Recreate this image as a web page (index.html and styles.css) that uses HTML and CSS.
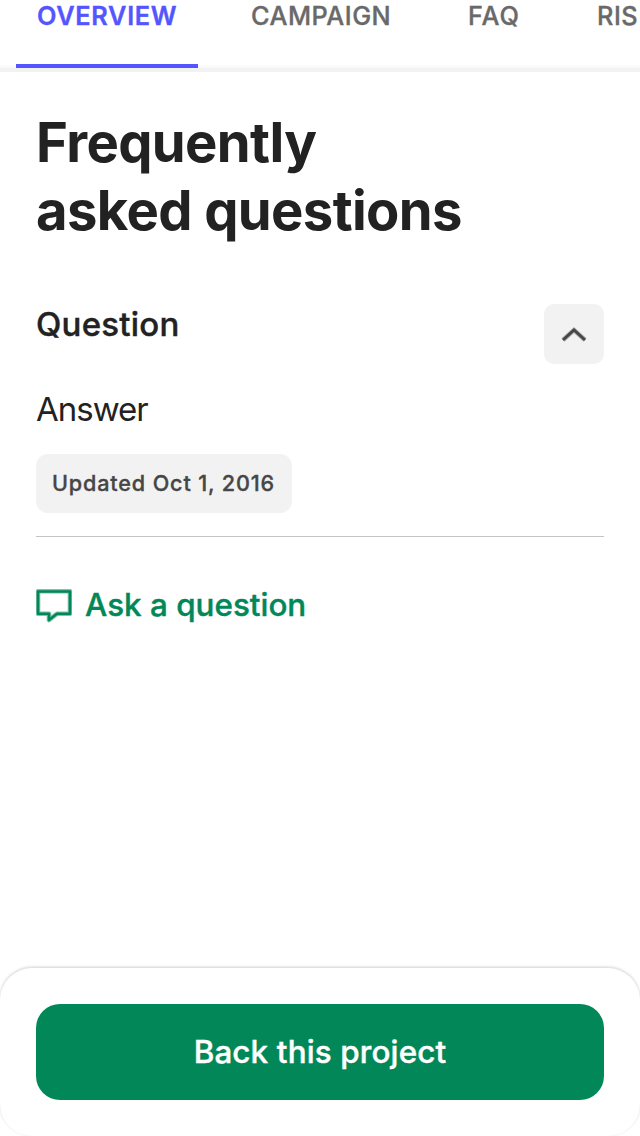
FILE: index.html
```html
<!DOCTYPE html>
<html lang="en">
<head>
<meta charset="utf-8">
<title>Frequently asked questions</title>
<link rel="stylesheet" href="styles.css">
</head>
<body>
<div class="screen">
  <nav class="tabs">
    <a class="tab tab-active">OVERVIEW</a>
    <a class="tab tab-campaign">CAMPAIGN</a>
    <a class="tab tab-faq">FAQ</a>
    <a class="tab tab-risks">RIS</a>
  </nav>
  <div class="tabs-edge"></div>
  <main class="content">
    <h1 class="title">Frequently<br>asked questions</h1>
    <section class="item">
      <div class="item-head">
        <h2 class="question">Question</h2>
        <button class="toggle" aria-label="Collapse">
          <svg width="28" height="20" viewBox="0 0 28 20"><path d="M3 16L14 6L25 16" fill="none" stroke="#464646" stroke-opacity=".4" stroke-width="4.6"/><path d="M3 16L14 6L25 16" fill="none" stroke="#464646" stroke-width="2.8"/></svg>
        </button>
      </div>
      <p class="answer">Answer</p>
      <span class="updated">Updated Oct 1, 2016</span>
    </section>
    <a class="ask">
      <svg class="ask-icon" width="36" height="34" viewBox="0 0 36 34"><path d="M2 2.3H34V24.7H21L13 31V24.7H2Z" fill="none" stroke="#028858" stroke-opacity=".5" stroke-width="4.6" stroke-linejoin="round"/><path d="M2 2.5H34V24.7H21L13 31V24.7H2Z" fill="none" stroke="#028858" stroke-width="2.6" stroke-linejoin="round"/></svg>
      <span class="ask-label">Ask a question</span>
    </a>
  </main>
  <footer class="footer"><button class="back">Back this project</button></footer>
</div>
</body>
</html>
```
FILE: styles.css
```css
* { box-sizing: border-box; }
body { margin: 0; font-family: Inter, sans-serif; color: #222; background: #fff; }
.screen { width: 640px; height: 1136px; overflow: hidden; display: flex; flex-direction: column; }
.tabs { flex: none; height: 68px; padding-left: 16px; display: flex; overflow: hidden; background: linear-gradient(#fff 64px, #f8f8f8 68px); }
.tab { flex: none; height: 68px; padding-left: 21px; font-size: 25.3px; line-height: 32px; font-weight: 500; letter-spacing: .5px; color: #696969; white-space: nowrap; -webkit-text-stroke: .35px currentColor; }
.tab-active { width: 182px; color: #5555ff; font-weight: 600; letter-spacing: .7px; border-bottom: 4px solid #5555ff; }
.tab-campaign { width: 217px; padding-left: 53px; }
.tab-faq { width: 182px; padding-left: 53px; letter-spacing: .9px; }
.tab-risks { padding-left: 0; }
.tabs-edge { flex: none; height: 4px; background: #f2f2f2; }
.content { flex: 1; padding: 36px 36px 0; }
.title { margin: 0; font-size: 54.4px; line-height: 68px; font-weight: 700; letter-spacing: -.63px; }
.item { margin-top: 60px; height: 233px; border-bottom: 1px solid #c4c4c4; }
.item-head { display: flex; justify-content: space-between; height: 60px; }
.question { margin: 0; font-size: 33px; line-height: 40px; font-weight: 500; letter-spacing: .22px; -webkit-text-stroke: .4px currentColor; }
.toggle { width: 60px; height: 60px; padding: 0; border: 0; border-radius: 10px; background: #f2f2f2; display: flex; align-items: center; justify-content: center; }
.answer { margin: 25px 0 24px; font-size: 33px; line-height: 41px; letter-spacing: -1px; }
.updated { display: flex; align-items: center; width: 256px; height: 59px; padding: 0 0 1px 16px; border-radius: 12px; background: #f2f2f2; color: #464646; font-size: 21.6px; font-weight: 500; letter-spacing: .85px; white-space: nowrap; -webkit-text-stroke: .35px currentColor; }
.ask { display: flex; align-items: center; margin-top: 48px; height: 41px; gap: 13px; color: #028858; font-size: 31.4px; font-weight: 500; letter-spacing: 0; }
.ask-label { padding-bottom: 2px; -webkit-text-stroke: .4px currentColor; }
.footer { flex: none; height: 168px; padding: 36px 36px 0; background: #fff; border-radius: 32px; box-shadow: 0 -1px 3px rgba(0, 0, 0, .19); clip-path: inset(-6px 0 0 0); }
.back { display: block; width: 568px; height: 96px; padding: 0; border: 0; border-radius: 24px; background: #028858; color: #fff; font: 500 31.4px Inter, sans-serif; letter-spacing: .14px; -webkit-text-stroke: .4px currentColor; }
```
